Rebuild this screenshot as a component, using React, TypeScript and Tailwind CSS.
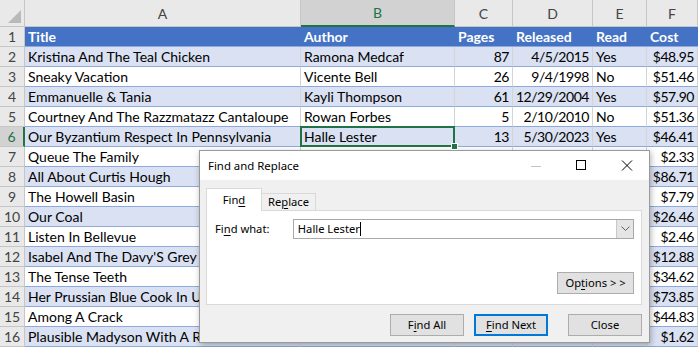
import React from 'react';

const cols = ['A', 'B', 'C', 'D', 'E', 'F'];

const header = ['Title', 'Author', 'Pages', 'Released', 'Read', 'Cost'];

// rows 7+ have columns B..E behind the dialog, so they stay blank
const rows: string[][] = [
  ['Kristina And The Teal Chicken', 'Ramona Medcaf', '87', '4/5/2015', 'Yes', '$48.95'],
  ['Sneaky Vacation', 'Vicente Bell', '26', '9/4/1998', 'No', '$51.46'],
  ['Emmanuelle & Tania', 'Kayli Thompson', '61', '12/29/2004', 'Yes', '$57.90'],
  ['Courtney And The Razzmatazz Cantaloupe', 'Rowan Forbes', '5', '2/10/2010', 'No', '$51.36'],
  ['Our Byzantium Respect In Pennsylvania', 'Halle Lester', '13', '5/30/2023', 'Yes', '$46.41'],
  ['Queue The Family', '', '', '', '', '$2.33'],
  ['All About Curtis Hough', '', '', '', '', '$86.71'],
  ['The Howell Basin', '', '', '', '', '$7.79'],
  ['Our Coal', '', '', '', '', '$26.46'],
  ['Listen In Bellevue', '', '', '', '', '$2.46'],
  ["Isabel And The Davy'S Grey C", '', '', '', '', '$12.88'],
  ['The Tense Teeth', '', '', '', '', '$34.62'],
  ['Her Prussian Blue Cook In Ut', '', '', '', '', '$73.85'],
  ['Among A Crack', '', '', '', '', '$44.83'],
  ['Plausible Madyson With A R', '', '', '', '', '$1.62'],
];

const grid = 'grid grid-cols-[25px_276px_154px_58px_80px_54px_51px]';
const numeric = [false, false, true, true, false, true];

const TitleButtons = () => (
  <div className="flex items-center h-full">
    <svg width="46" height="29" viewBox="0 0 46 29">
      <line x1="20" y1="15.5" x2="30" y2="15.5" stroke="#c4c4c4" strokeWidth="1" />
    </svg>
    <svg width="46" height="29" viewBox="0 0 46 29">
      <rect x="19.5" y="9.5" width="9" height="9" fill="none" stroke="#000" strokeWidth="1" />
    </svg>
    <svg width="46" height="29" viewBox="0 0 46 29">
      <path d="M19 9.5 L29 19.5 M29 9.5 L19 19.5" stroke="#000" strokeWidth="1" />
    </svg>
  </div>
);

const DialogButton = ({ children, focused }: { children: React.ReactNode; focused?: boolean }) => (
  <div
    className={
      focused
        ? 'w-[74px] h-[22px] flex items-center justify-center bg-[#E1E1E1] border-2 border-[#0078D7]'
        : 'w-[74px] h-[22px] flex items-center justify-center bg-[#E1E1E1] border border-[#ADADAD]'
    }
  >
    {children}
  </div>
);

const FindReplaceDialog = () => (
  <div className="absolute left-[199px] top-[150px] w-[451px] h-[193px] flex flex-col bg-[#F0F0F0] border border-[#9A9A9A] shadow-[1px_2px_6px_rgba(0,0,0,0.3)] font-['Noto_Sans',sans-serif] text-[11.2px] text-black">
    {/* title bar */}
    <div className="h-[29px] bg-white flex items-center justify-between">
      <span className="pl-[8px] pt-[1px] text-[11.4px]">Find and Replace</span>
      <TitleButtons />
    </div>

    <div className="flex flex-col px-[6px] pt-[8px] pb-[8px] pr-[7px]">
      {/* tabs */}
      <div className="flex items-end h-[23px] -mb-px relative z-10">
        <div className="w-[56px] h-[23px] bg-white border border-b-0 border-[#D9D9D9] flex items-center justify-center">
          <span>
            Fin<span className="underline underline-offset-2">d</span>
          </span>
        </div>
        <div className="w-[55px] h-[17px] mb-px -ml-px bg-[#F0F0F0] border border-b-0 border-[#D9D9D9] flex items-center justify-center">
          <span>
            Re<span className="underline underline-offset-2">p</span>lace
          </span>
        </div>
      </div>

      {/* panel */}
      <div className="h-[95px] bg-white border border-[#D9D9D9] flex flex-col pl-[8px] pr-[7px] pt-[8px]">
        <div className="flex items-center h-[20px]">
          <span className="w-[78px]">
            Fi<span className="underline underline-offset-2">n</span>d what:
          </span>
          <div className="w-[342px] h-[20px] border border-[#A8A8A8] flex items-center">
            <span className="pl-[4px] flex items-center">
              Halle Lester<span className="w-px h-[14px] bg-black" />
            </span>
            <div className="ml-auto w-[17px] h-[18px] bg-[#E5E5E5] border-l border-[#C8C8C8] flex items-center justify-center">
              <svg width="9" height="6" viewBox="0 0 9 6">
                <path d="M0.5 0.5 L4.5 4.5 L8.5 0.5" fill="none" stroke="#606060" strokeWidth="1" />
              </svg>
            </div>
          </div>
        </div>
        <div className="flex justify-end mt-[33px]">
          <div className="w-[77px] h-[22px] flex items-center justify-center bg-[#E1E1E1] border border-[#ADADAD]">
            <span>
              Op<span className="underline underline-offset-2">t</span>ions &gt; &gt;
            </span>
          </div>
        </div>
      </div>

      {/* bottom buttons */}
      <div className="flex justify-end mt-[9px]">
        <DialogButton>
          <span>
            F<span className="underline underline-offset-2">i</span>nd All
          </span>
        </DialogButton>
        <div className="ml-[10px]">
          <DialogButton focused>
            <span>
              <span className="underline underline-offset-2">F</span>ind Next
            </span>
          </DialogButton>
        </div>
        <div className="ml-[20px]">
          <DialogButton>Close</DialogButton>
        </div>
      </div>
    </div>
  </div>
);

export default function App() {
  return (
    <div className="relative w-[698px] h-[347px] overflow-hidden bg-white font-['Lato',sans-serif] text-[14px] text-black">
      {/* column headers */}
      <div className={grid}>
        <div className="h-[27px] bg-[#E9E9E9] border-b border-r border-[#C6C6C6] flex items-end justify-end p-[3px]">
          <svg width="13" height="13" viewBox="0 0 13 13">
            <path d="M13 0 L13 13 L0 13 Z" fill="#B9B9B9" />
          </svg>
        </div>
        {cols.map((c) => (
          <div
            key={c}
            className={
              c === 'B'
                ? 'h-[27px] bg-[#D2D2D2] border-b-2 border-b-[#217346] border-r border-r-[#C6C6C6] flex items-center justify-center text-[#217346]'
                : 'h-[27px] bg-[#E9E9E9] border-b border-r border-[#C6C6C6] flex items-center justify-center text-[#444]'
            }
          >
            {c}
          </div>
        ))}
      </div>

      {/* header row 1 */}
      <div className={grid}>
        <div className="h-[20px] bg-[#E9E9E9] border-b border-r border-[#C6C6C6] flex items-center justify-center text-[#444]">
          1
        </div>
        {header.map((h) => (
          <div
            key={h}
            className="h-[20px] bg-[#4472C4] border-b border-[#8EA9DB] flex items-center px-[3px] text-white font-bold"
          >
            {h}
          </div>
        ))}
      </div>

      {/* data rows */}
      {rows.map((r, i) => {
        const n = i + 2;
        const banded = n % 2 === 0;
        const selectedRow = n === 6;
        return (
          <div key={n} className={grid}>
            <div
              className={
                selectedRow
                  ? 'h-[20px] bg-[#D2D2D2] border-b border-b-[#C6C6C6] border-r-2 border-r-[#217346] flex items-center justify-center text-[#217346]'
                  : 'h-[20px] bg-[#E9E9E9] border-b border-r border-[#C6C6C6] flex items-center justify-center text-[#444]'
              }
            >
              {n}
            </div>
            {r.map((v, j) => {
              const selected = selectedRow && j === 1;
              return (
                <div
                  key={j}
                  className={
                    (banded ? 'bg-[#D9E1F2] ' : 'bg-white ') +
                    'relative h-[20px] border-b border-b-[#8EA9DB] border-r border-r-[#D4D4D4] flex items-center px-[3px] whitespace-nowrap ' +
                    (selected ? 'overflow-visible z-10 ' : 'overflow-hidden ') +
                    (numeric[j] ? 'justify-end tracking-[-0.45px]' : 'justify-start')
                  }
                >
                  {v}
                  {selected && (
                    <>
                      <div className="absolute -left-px -top-px -right-px -bottom-px border-2 border-[#217346]" />
                      <div className="absolute -right-[4px] -bottom-[4px] w-[7px] h-[7px] bg-[#217346] border border-white" />
                    </>
                  )}
                </div>
              );
            })}
          </div>
        );
      })}

      <FindReplaceDialog />
    </div>
  );
}
